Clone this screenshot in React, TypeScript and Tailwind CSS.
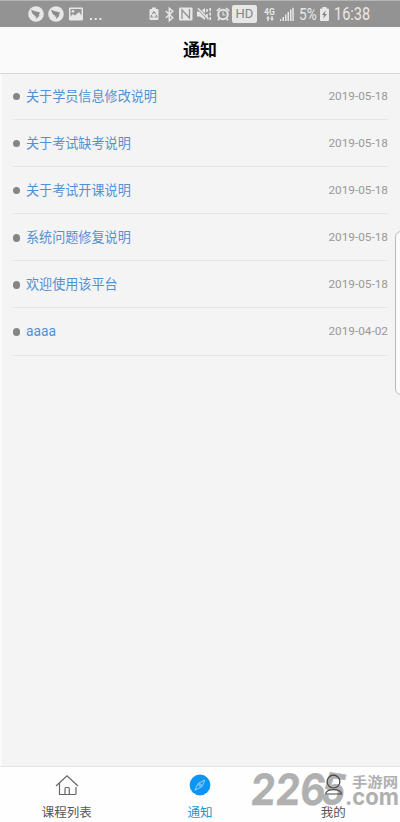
import React from "react";

const notices = [
  { title: "关于学员信息修改说明", date: "2019-05-18" },
  { title: "关于考试缺考说明", date: "2019-05-18" },
  { title: "关于考试开课说明", date: "2019-05-18" },
  { title: "系统问题修复说明", date: "2019-05-18" },
  { title: "欢迎使用该平台", date: "2019-05-18" },
  { title: "aaaa", date: "2019-04-02" },
];

function BirdBadge() {
  return (
    <svg className="h-4 w-4 shrink-0" viewBox="0 0 16 16">
      <circle cx="8" cy="8" r="7.8" fill="#e7e7e7" />
      <path d="M3.2 3.4c2 1.6 5 1.8 8.8 3.2-.2 1.2-.8 2-1.5 3h1.2L7.8 13.2l.6-2.6-1.9-.2.5-.9C4.8 8.7 3.4 6.2 3.2 3.4Z" fill="#8c8c8c" />
    </svg>
  );
}

function StatusBar() {
  return (
    <div className="flex h-[27px] shrink-0 items-center border-t border-[#b5b5b5] bg-[#939393] pl-7 text-[#e8e8e8]">
      <BirdBadge />
      <div className="w-1" />
      <BirdBadge />
      <svg className="ml-[5px] h-[14px] w-[14px] shrink-0" viewBox="0 0 14 14">
        <path fill="#e7e7e7" fillRule="evenodd" d="M1 .5h12a1 1 0 0 1 1 1v11a1 1 0 0 1-1 1H1a1 1 0 0 1-1-1v-11a1 1 0 0 1 1-1ZM1.5 2v9h11V2Z" />
        <circle cx="4" cy="4.3" r="1.3" fill="#e7e7e7" />
        <path d="m1 10 3-3 2 1.5L10 5l3 4v3H1Z" fill="#e7e7e7" />
      </svg>
      <svg className="ml-[7px] h-[14px] w-3 shrink-0" viewBox="0 0 12 14" fill="#e7e7e7">
        <path d="M0 11h2v2H0zM4.7 11h2v2h-2zM9.4 11h2v2h-2z" />
      </svg>
      <svg className="ml-[47px] h-[14px] w-[10px] shrink-0" viewBox="0 0 10 14">
        <path d="M3 .5h4V2h1.5q1 0 1 1v9q0 1-1 1h-7q-1 0-1-1V3q0-1 1-1H3Z" fill="#e7e7e7" />
        <path d="m3.3 7 1.6-2.2L6.6 7M7.3 8l.5 2H5.6M4.3 10H2l.7-2" fill="none" stroke="#939393" strokeWidth="1.2" />
      </svg>
      <svg className="ml-[6px] h-[15px] w-[9px] shrink-0" viewBox="0 0 9 15">
        <path d="m.8 4 7 6.7-3.5 3V1.3l3.5 3-7 6.7" fill="none" stroke="#e7e7e7" strokeWidth="1.5" />
      </svg>
      <svg className="ml-[5px] h-[14px] w-[14px] shrink-0" viewBox="0 0 14 14">
        <rect y=".5" width="13.5" height="13" rx="1" fill="#e7e7e7" />
        <path d="M3 12V3l7.5 8V2" fill="none" stroke="#939393" strokeWidth="1.3" />
      </svg>
      <svg className="ml-1 h-[14px] w-[15px] shrink-0" viewBox="0 0 15 14">
        <path d="M0 4.5h3L8 1v12L3 9.5H0Z" fill="#e7e7e7" />
        <path d="m1 1.2 10.5 11" stroke="#939393" strokeWidth="3" />
        <path d="m1 1.2 10.5 11" stroke="#e7e7e7" strokeWidth="1.4" />
        <path d="M10 2v3M10 7v3M13.2 1v3M13.2 5.5v3M13.2 10v3" stroke="#e7e7e7" strokeWidth="1.6" />
      </svg>
      <svg className="ml-1 h-[14px] w-[14px] shrink-0" viewBox="0 0 14 14" fill="none" stroke="#e7e7e7">
        <circle cx="7" cy="7.5" r="4.8" strokeWidth="2" />
        <path d="M.8 4 4 1M13.2 4 10 1M3.3 11.5 2 13.3M10.7 11.5l1.3 1.8" strokeWidth="1.7" />
        <path d="M7 4.5V8h2.5" strokeWidth="1.1" />
      </svg>
      <div className="ml-[2px] flex h-[18px] w-[25px] shrink-0 items-center justify-center rounded-[2px] bg-[#e7e7e7] font-['Roboto',sans-serif] text-[13px] text-[#858585]">HD</div>
      <svg className="ml-[7px] h-[15px] w-3 shrink-0" viewBox="0 0 12 15">
        <text x="0" y="7.5" fill="#e7e7e7" fontSize="8.5" fontWeight="bold" fontFamily="Roboto, sans-serif">4G</text>
        <path d="m2 11.5 2-2.5 2 2.5H4.7V14H3.3v-2.5ZM7.3 9h1.4v2.5H10L8 14l-2-2.5h1.3Z" fill="#e7e7e7" />
      </svg>
      <svg className="ml-[4px] h-[14px] w-[14px] shrink-0" viewBox="0 0 14 14" fill="#e7e7e7">
        <path d="M0 12h1.2v2H0zM2.5 10h1.5v4H2.5zM5 7.5h1.5V14H5zM7.5 5H9v9H7.5zM10 2.5h1.5V14H10zM12.3.8h1.5V14h-1.5z" />
      </svg>
      <span className="ml-[5px] mt-px w-[18px] shrink-0 font-['Roboto',sans-serif] text-[17px] leading-none">
        <span className="block origin-left scale-x-[.8]">5%</span>
      </span>
      <svg className="ml-[3px] h-[14px] w-[9px] shrink-0" viewBox="0 0 9 14">
        <path d="M2.5 0h4v1.5H8q1 0 1 1V13q0 1-1 1H1q-1 0-1-1V2.5q0-1 1-1h1.5Z" fill="#e7e7e7" />
        <path d="M5.5 3.5 2 8h2l-.6 3.5L7 7H5Z" fill="#858585" />
      </svg>
      <span className="ml-[5px] mt-px w-9 shrink-0 font-['Roboto',sans-serif] text-[17.5px] leading-none">
        <span className="block origin-left scale-x-[.83]">16:38</span>
      </span>
    </div>
  );
}

function HomeIcon() {
  return (
    <svg className="h-[22px] w-6" viewBox="0 0 24 22" fill="none" stroke="#666" strokeWidth="1.2">
      <path d="m1 12 11-10.3L23 12M4.5 9v11.5H20q1 0 1-1V13M10 20.5V15q0-1.5 1-1.5h2.3q1 0 1 1.5v5.5" />
    </svg>
  );
}

function CompassIcon() {
  return (
    <svg className="h-[22px] w-[22px]" viewBox="0 0 22 22">
      <circle cx="11" cy="11" r="10.4" fill="#0b96f5" />
      <path d="M15.8 6.1 13 12.6l-7 3.6L8.9 9.5Z" fill="none" stroke="#b5e0ff" strokeWidth=".8" />
      <circle cx="11" cy="11" r="1.2" fill="none" stroke="#b5e0ff" strokeWidth=".8" />
    </svg>
  );
}

function PersonIcon() {
  return (
    <svg className="h-[22px] w-[22px]" viewBox="0 0 22 22" fill="none" stroke="#444" strokeWidth="1.2">
      <circle cx="11.5" cy="7.6" r="6.4" />
      <path d="M3.7 20c0-2.6 3.3-4.4 7.8-4.4s8 1.8 8 4.4Z" />
    </svg>
  );
}

function Tab({ icon, label, active = false }: { icon: React.ReactNode; label: string; active?: boolean }) {
  return (
    <div className={`flex flex-1 flex-col items-center pt-[7px] text-[12.5px] ${active ? "text-[#2297d5]" : "text-[#555]"}`}>
      {icon}
      <span className="mt-[7.5px] leading-[18px]">{label}</span>
    </div>
  );
}

function Watermark() {
  return (
    <svg className="absolute right-0 bottom-[9px] h-[46px] w-[152px] overflow-visible" viewBox="0 0 152 46" fill="#b0b0b0">
      <g fontFamily="Inter, sans-serif" fontWeight="bold" fontSize="43" stroke="#b0b0b0" strokeWidth=".4" transform="translate(3 0) skewX(-5)">
        <text x="2" y="37.5" textLength="75" lengthAdjust="spacingAndGlyphs">226</text>
        <text x="73" y="37.5" textLength="24" lengthAdjust="spacingAndGlyphs" transform="rotate(8 84 22)">5</text>
      </g>
      <text x="104" y="19.5" fontFamily="Noto Sans CJK SC, sans-serif" fontWeight="bold" fontSize="14" textLength="46" lengthAdjust="spacingAndGlyphs">手游网</text>
      <text x="97" y="37.5" fontFamily="Inter, sans-serif" fontWeight="bold" fontSize="23" textLength="54" lengthAdjust="spacingAndGlyphs">.com</text>
    </svg>
  );
}

export default function App() {
  return (
    <div className="relative flex h-[822px] w-[400px] flex-col overflow-hidden bg-[#f4f4f4] font-['Roboto','Noto_Sans_CJK_SC',sans-serif]">
      <StatusBar />
      <header className="flex h-[47px] shrink-0 items-center justify-center border-b border-[#d9d9d9] bg-[#fafafa] pt-px text-[17px] font-bold text-black">
        通知
      </header>
      <main className="flex-1 border-l-2 border-[#fafafa]">
        <ul className="-mt-px ml-[11px] mr-3">
          {notices.map((notice, i) => (
            <li key={i} className="flex h-[47.1px] items-center border-b border-[#e5e5e5]">
              <span className="mt-px h-[7.5px] w-[7px] rounded-full bg-[#858585]" />
              <span className={`ml-[6px] text-[#5290d4] ${notice.title === "aaaa" ? "-mt-px text-[13.8px]" : "mt-px text-[13.1px]"}`}>{notice.title}</span>
              <time className="ml-auto mt-px text-[11.8px] text-[#999]">{notice.date}</time>
            </li>
          ))}
        </ul>
      </main>
      <div className="absolute -right-3 top-[231px] h-[164px] w-[17px] rounded-[6px] border border-[#bbb] bg-[#fafafa]" />
      <nav className="relative flex h-14 shrink-0 border-t border-[#e4e4e4] bg-[#fefefe]">
        <Watermark />
        <div className="relative flex w-full">
          <Tab icon={<HomeIcon />} label="课程列表" />
          <Tab icon={<CompassIcon />} label="通知" active />
          <Tab icon={<PersonIcon />} label="我的" />
        </div>
      </nav>
    </div>
  );
}
